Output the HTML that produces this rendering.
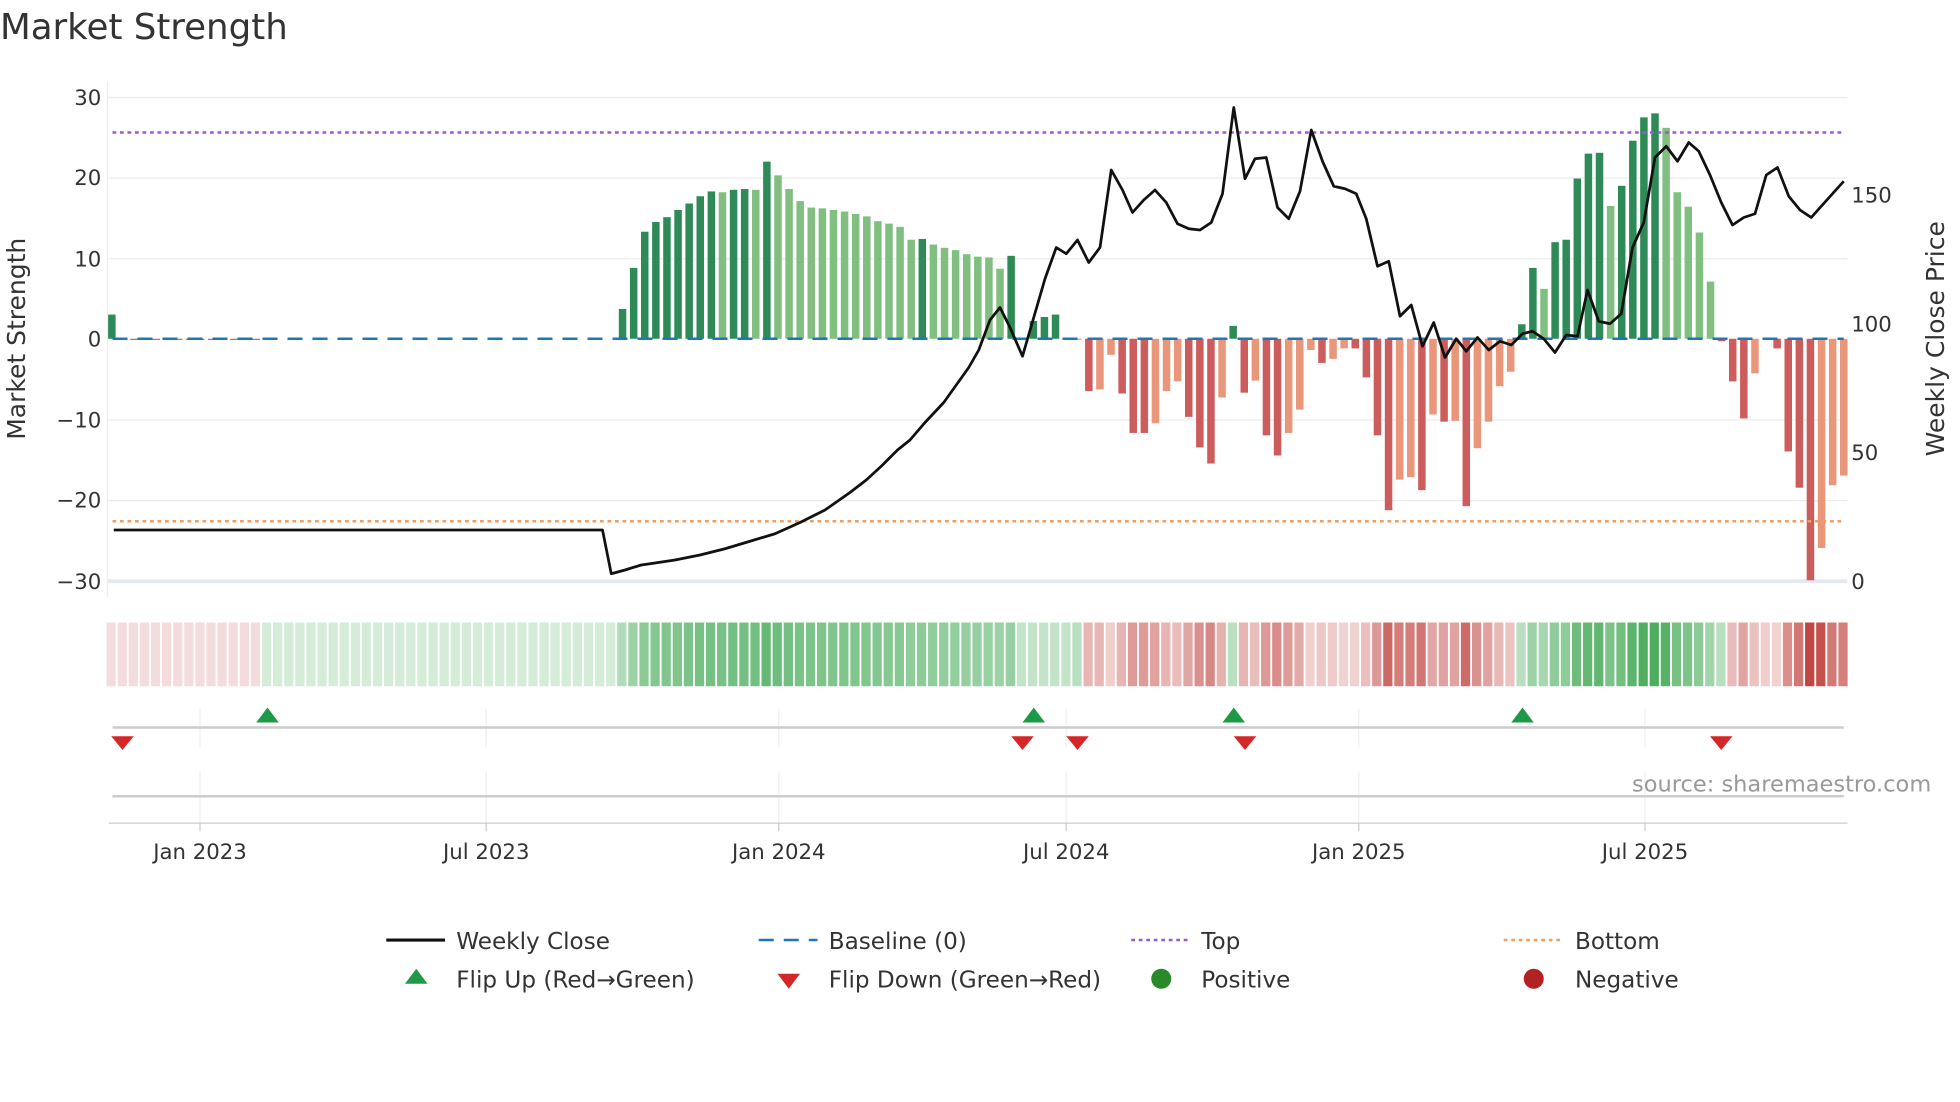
<!DOCTYPE html>
<html><head><meta charset="utf-8">
<style>
html,body{margin:0;padding:0;background:#fff;width:1960px;height:1102px;overflow:hidden}
svg{display:block}
text{font-family:"DejaVu Sans","Liberation Sans",sans-serif;fill:#333}
</style></head>
<body>
<svg id="s" width="1960" height="1102" viewBox="0 0 1568 881.6" xmlns="http://www.w3.org/2000/svg">
<text x="0" y="31" font-size="28.5" fill="#333">Market Strength</text>
<g stroke="#ececec" stroke-width="1">
<line x1="86" x2="1478" y1="78" y2="78"/><line x1="86" x2="1478" y1="142.5" y2="142.5"/>
<line x1="86" x2="1478" y1="207" y2="207"/><line x1="86" x2="1478" y1="336" y2="336"/>
<line x1="86" x2="1478" y1="400.5" y2="400.5"/>
</g>
<line x1="86" x2="1478" y1="465" y2="465" stroke="#e4e8ef" stroke-width="3"/>
<line x1="86" x2="86" y1="65" y2="478" stroke="#eee"/>
<g font-size="17" text-anchor="end">
<text x="81" y="84">30</text><text x="81" y="148">20</text><text x="81" y="213">10</text>
<text x="81" y="277">0</text><text x="81" y="342">−10</text><text x="81" y="406">−20</text><text x="81" y="471">−30</text>
</g>
<g font-size="17">
<text x="1481" y="162">150</text><text x="1481" y="265">100</text><text x="1481" y="368">50</text><text x="1481" y="471">0</text>
</g>
<text transform="translate(20,271) rotate(-90)" font-size="20" text-anchor="middle">Market Strength</text>
<text transform="translate(1555,271) rotate(-90)" font-size="20" text-anchor="middle">Weekly Close Price</text>
<g id="bars"></g>
<line x1="90" x2="1475" y1="271" y2="271" stroke="#1f77b4" stroke-width="2" stroke-dasharray="12,8"/>
<line x1="90" x2="1475" y1="106" y2="106" stroke="#9b59d6" stroke-width="2" stroke-dasharray="3,3"/>
<line x1="90" x2="1475" y1="417" y2="417" stroke="#f0a060" stroke-width="2" stroke-dasharray="3,3"/>
<polyline id="price" fill="none" stroke="#111" stroke-width="2.2" stroke-linejoin="round"/>
<g id="strip"></g>
<g stroke="#eef0f2"><line x1="160" x2="160" y1="567" y2="598"/><line x1="389" x2="389" y1="567" y2="598"/><line x1="623" x2="623" y1="567" y2="598"/><line x1="853" x2="853" y1="567" y2="598"/><line x1="1087" x2="1087" y1="567" y2="598"/><line x1="1316" x2="1316" y1="567" y2="598"/>
<line x1="160" x2="160" y1="617" y2="658"/><line x1="389" x2="389" y1="617" y2="658"/><line x1="623" x2="623" y1="617" y2="658"/><line x1="853" x2="853" y1="617" y2="658"/><line x1="1087" x2="1087" y1="617" y2="658"/><line x1="1316" x2="1316" y1="617" y2="658"/></g>
<line x1="90" x2="1475" y1="582" y2="582" stroke="#ccc" stroke-width="2"/>
<line x1="90" x2="1475" y1="637" y2="637" stroke="#ccc" stroke-width="2"/>
<g id="flips"></g>
<text x="1545" y="633" font-size="18" text-anchor="end" style="fill:#999">source: sharemaestro.com</text>
<line x1="87" x2="1478" y1="658.5" y2="658.5" stroke="#ccc"/>
<g stroke="#ccc"><line x1="160" x2="160" y1="658" y2="665"/><line x1="389" x2="389" y1="658" y2="665"/><line x1="623" x2="623" y1="658" y2="665"/><line x1="853" x2="853" y1="658" y2="665"/><line x1="1087" x2="1087" y1="658" y2="665"/><line x1="1316" x2="1316" y1="658" y2="665"/></g>
<g font-size="17" text-anchor="middle">
<text x="160" y="687">Jan 2023</text><text x="389" y="687">Jul 2023</text><text x="623" y="687">Jan 2024</text>
<text x="853" y="687">Jul 2024</text><text x="1087" y="687">Jan 2025</text><text x="1316" y="687">Jul 2025</text>
</g>
<g font-size="18.5">
<line x1="309" x2="356" y1="752" y2="752" stroke="#111" stroke-width="2.5"/><text x="365" y="759">Weekly Close</text>
<line x1="607" x2="654" y1="752" y2="752" stroke="#1f77b4" stroke-width="2" stroke-dasharray="12,8"/><text x="663" y="759">Baseline (0)</text>
<line x1="905" x2="952" y1="752" y2="752" stroke="#9b59d6" stroke-width="2" stroke-dasharray="3,3"/><text x="961" y="759">Top</text>
<line x1="1203" x2="1250" y1="752" y2="752" stroke="#f0a060" stroke-width="2" stroke-dasharray="3,3"/><text x="1260" y="759">Bottom</text>
<polygon points="333,775 324,787 342,787" fill="#1e9a46"/><text x="365" y="790">Flip Up (Red→Green)</text>
<polygon points="622,779 640,779 631,791" fill="#d62728"/><text x="663" y="790">Flip Down (Green→Red)</text>
<circle cx="929" cy="783" r="8" fill="#2a8a2a"/><text x="961" y="790">Positive</text>
<circle cx="1227" cy="783" r="8" fill="#b22222"/><text x="1260" y="790">Negative</text>
</g>
</svg>
<script>
var NS="http://www.w3.org/2000/svg";
function el(t,a,p){var e=document.createElementNS(NS,t);for(var k in a)e.setAttribute(k,a[k]);p.appendChild(e);return e;}
var v=[3];
for(var i=1;i<46;i++)v.push(i<14?-0.15:0);
v=v.concat([3.7,8.8,13.3,14.5,15.1,16,16.8,17.7,18.3,18.2,18.5,18.6,18.5,22,20.3,18.6,17.1,16.3,16.2,16.0,15.8,15.5,15.2,14.6,14.3,13.9,12.3,12.4,11.7,11.3,11,10.5,10.2,10.1,8.7,10.3,
0,2.2,2.7,3,0,-0.1,-6.5,-6.3,-2,-6.8,-11.7,-11.7,-10.5,-6.5,-5.3,-9.7,-13.5,-15.5,-7.3,1.6,-6.7,-5.2,-12,-14.5,-11.7,-8.8,-1.4,-3,-2.5,-1.2,-1.2,-4.8,-12,-21.3,-17.5,-17.2,-18.8,-9.4,-10.3,-10.2,-20.8,-13.6,-10.3,-5.9,-4.1,1.8,8.8,6.2,12,12.3,19.9,23,23.1,16.5,19,24.6,27.5,28,26.2,18.2,16.4,13.2,7.1,-0.3,-5.3,-9.9,-4.3,0,-1.2,-14,-18.5,-30,-26,-18.2,-17]);
var n=v.length, x0=89.5, x1=1475, dx=(x1-x0)/(n-1);
var bars=document.getElementById('bars'), strip=document.getElementById('strip');
function mix(c,t){var w=[255,255,255];return 'rgb('+c.map(function(q,i){return Math.round(w[i]+(q-w[i])*t)}).join(',')+')';}
for(var i=0;i<n;i++){
 var x=x0+i*dx, val=v[i], y0=271, h=Math.abs(val)*6.44;
 var prev=i>0?v[i-1]:0, col;
 if(val>=0) col=(val>=prev)?'#2e8b57':'#80bf80'; else col=(val<=prev)?'#cd5c5c':'#e9967a';
 if(h>0.3) el('rect',{x:x-3,y:val>=0?y0-h:y0,width:6,height:h,fill:col},bars);
 var c,t;
 if(i<14){c=[200,60,60];t=0.18;}
 else if(i<46){c=[46,160,67];t=0.2;}
 else { var s=val; if(Math.abs(s)<0.5) s=(i>150?-1:(prev>=0?1:-1))*2;
   if(s>0){c=[46,160,67];t=0.3+0.55*Math.min(Math.abs(s),28)/28;} else {c=[190,60,55];t=0.2+0.75*Math.min(Math.abs(s),28)/28;}
   if(i>=82&&i<=86){c=[46,160,67];t=0.28;} }
 el('rect',{x:x-4.3,y:498,width:7.4,height:51,fill:mix(c,t)},strip);
}
var pts=[[91,424],[482,424],[489,459],[500,456],[513,452],[520,451],[540,448],[560,444],[580,439],[600,433],[620,427],[640,418],[660,408],[680,394],[693,384],[705,373],[718,360],[728,352],[740,338],[755,322],[765,308],[775,294],[783,280],[792,256],[800,246],[808,262],[818,285],[827,254],[836,223],[845,198],[853,203],[862,192],[871,210],[880,198],[889,136],[898,152],[906,170],[915,160],[924,152],[933,162],[942,179],[951,183],[960,184],[969,178],[978,155],[987,86],[996,143],[1004,127],[1013,126],[1022,166],[1031,175],[1040,153],[1049,104],[1058,129],[1067,149],[1076,151],[1085,155],[1093,175],[1102,213],[1111,209],[1120,253],[1129,244],[1138,277],[1147,258],[1156,286],[1165,271],[1173,281],[1182,270],[1191,280],[1200,273],[1209,276],[1218,267],[1226,265],[1235,271],[1244,282],[1253,268],[1262,269],[1270,232],[1279,257],[1288,259],[1297,251],[1306,198],[1315,178],[1324,126],[1333,117],[1342,129],[1351,114],[1359,121],[1368,140],[1377,162],[1386,180],[1395,174],[1404,171],[1413,140],[1422,134],[1431,157],[1440,168],[1449,174],[1457,165],[1466,155],[1475,145]];
document.getElementById('price').setAttribute('points',pts.map(function(p){return p.join(',')}).join(' '));
var f=document.getElementById('flips');
[214,827,987,1218].forEach(function(x){el('polygon',{points:(x)+',566 '+(x-9)+',578 '+(x+9)+',578',fill:'#1e9a46'},f);});
[98,818,862,996,1377].forEach(function(x){el('polygon',{points:(x-9)+',589 '+(x+9)+',589 '+x+',600',fill:'#d62728'},f);});
</script>
</body></html>
